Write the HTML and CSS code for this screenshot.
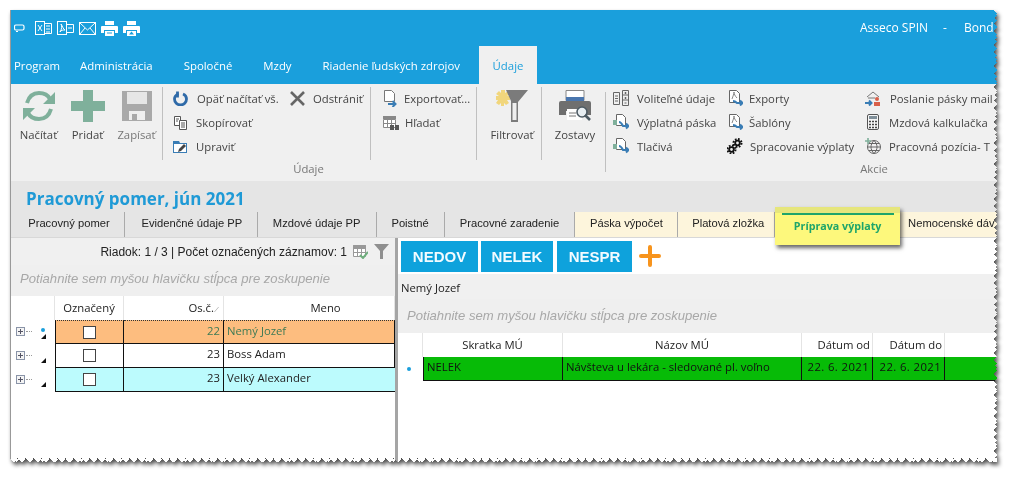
FILE: index.html
```html
<!DOCTYPE html>
<html lang="sk">
	<head>
		<meta charset="UTF-8">
		<title>Pracovný pomer, jún 2021</title>
		<link rel="stylesheet" href="styles.css">
	</head>
	<body>
		<div class="shot">
			<div class="window">
				<header class="bluebar">
					<div class="qat">
						<svg class="q-small" width="11" height="8" viewBox="0 0 11 8"><rect x=".5" y="1" width="9.500" height="5" rx="1.500" fill="none" stroke="#fff" stroke-width="1.200"/><path d="M2 7.500h2" stroke="#fff"/></svg>
						<svg width="17" height="17" viewBox="0 0 17 17" fill="none" stroke="#fff"><rect x=".5" y="1.500" width="9" height="13"/><path d="M9.500 3.500h7v10h-7M11 6h4M11 9h4M11 12h4M3 5l4 6M7 5l-4 6"/></svg>
						<svg width="17" height="17" viewBox="0 0 17 17" fill="none" stroke="#fff"><rect x=".5" y="1.500" width="9" height="13"/><path d="M9.500 4.500h7v8h-7M11 8h4M3 12c2-3 2-6 1-8 2 3 2 5 4 6-2 0-4 0-5 2z"/></svg>
						<svg width="17" height="17" viewBox="0 0 17 17" fill="none" stroke="#fff"><rect x=".5" y="2.500" width="16" height="12"/><path d="M1 3l7.500 7L16 3M1 14l5-6M16 14l-5-6"/></svg>
						<svg width="17" height="17" viewBox="0 0 17 17"><path fill="#fff" d="M4 1h9v4H4zM1 6h15a1 1 0 0 1 1 1v6h-3v-3H3v3H0V7a1 1 0 0 1 1-1z"/><path fill="#fff" d="M4 11h9v5H4z"/><path stroke="#1a9fdc" d="M6 13h5"/></svg>
						<svg width="17" height="17" viewBox="0 0 17 17"><path fill="#fff" d="M4 1h9v4H4zM1 6h15a1 1 0 0 1 1 1v6h-3v-3H3v3H0V7a1 1 0 0 1 1-1z"/><path fill="#fff" d="M4 11h9v5H4z"/><path fill="#1a9fdc" d="M8.500 11.500l2.500 3H6z"/></svg>
						<div class="account"><span>Asseco SPIN</span><span class="dash">-</span><span>Bond</span></div>
					</div>
					<nav class="rtabs">
						<a class="rtab short">Program</a>
						<a class="rtab">Administrácia</a>
						<a class="rtab">Spoločné</a>
						<a class="rtab">Mzdy</a>
						<a class="rtab">Riadenie ľudských zdrojov</a>
						<a class="rtab active">Údaje</a>
					</nav>
				</header>

				<div class="ribbon">
					<section class="rsection data">
						<div class="rcols">
							<div class="bigs first">
								<div class="big">
									<svg width="34" height="32" viewBox="0 0 34 32" fill="none" stroke="#7fb09b" stroke-width="4"><path d="M5 13C7 6 12 3 17 3c5 0 9 2 11 6"/><path d="M29 19c-2 7-7 10-12 10-5 0-9-2-11-6"/><path fill="#7fb09b" stroke="none" d="M33 2v12H21zM1 30V18h12z"/></svg>
									<span>Načítať</span>
								</div>
								<div class="big">
									<svg width="34" height="32" viewBox="0 0 34 32"><path fill="#7fb09b" d="M12 0h10v11h12v10H22v11H12V21H0V11h12z"/></svg>
									<span>Pridať</span>
								</div>
								<div class="big muted">
									<svg width="34" height="32" viewBox="0 0 32 32"><path fill="#a9a9a9" d="M1 1h30v30H1z"/><path fill="#e6e6e6" d="M6 2h20v12H6z"/><path fill="#efefef" d="M8 21h16v9H8z"/><path fill="#a9a9a9" d="M11 24h5v6h-5z"/></svg>
									<span>Zapísať</span>
								</div>
							</div>
							<i class="vsep"></i>
							<div class="scol c-reload">
								<div class="sbtn">
									<svg width="15" height="15" viewBox="0 0 15 15" fill="none" stroke="#2f6aa8" stroke-width="2.800"><path d="M5.500 3C2.500 4 1.500 6 1.500 8a6 6 0 0 0 12 0c0-2-1-4-3.500-5"/><path d="M4.500 .5v6"/></svg>
									<span class="gap-l">Opäť načítať vš.</span>
								</div>
								<div class="sbtn">
									<svg width="15" height="15" viewBox="0 0 15 15" fill="#fff" stroke="#555"><path d="M1.500 1.500h6v9h-6z"/><path d="M6.500 5.500h7v9h-7z"/><path d="M8 8h4M8 10h4M8 12h4M3 4h3M3 6h2"/></svg>
									<span>Skopírovať</span>
								</div>
								<div class="sbtn">
									<svg width="15" height="15" viewBox="0 0 15 15"><path fill="#3a7db5" d="M0 2h6l1 2h7v10H0z"/><path fill="#fff" d="M1 5h12v8H1z"/><path fill="#444" d="M5 13l1-3 5-5 2 2-5 5z"/></svg>
									<span>Upraviť</span>
								</div>
							</div>
							<div class="scol c-remove">
								<div class="sbtn">
									<svg width="15" height="15" viewBox="0 0 15 15" stroke="#666" stroke-width="2.600"><path d="M1 1l13 13M14 1L1 14"/></svg>
									<span>Odstrániť</span>
								</div>
							</div>
							<i class="vsep"></i>
							<div class="scol c-export">
								<div class="sbtn">
									<svg width="15" height="17" viewBox="0 0 15 17" fill="#fff" stroke="#777"><path d="M1.500 .5h7l3 3v8h-10z"/><path fill="none" stroke="#3a7db5" stroke-width="2" d="M5 14h7M9.500 11l3 3-3 3"/></svg>
									<span>Exportovať...</span>
								</div>
								<div class="sbtn">
									<svg width="16" height="15" viewBox="0 0 16 15"><path fill="#888" d="M0 1h13v3H0z"/><path fill="#fff" stroke="#888" d="M.5 4.500h12v8H.5zM4.500 4.500v8M8.500 4.500v8M.5 8.500h12"/><path fill="#555" d="M7 10h4v5H7zM12 10h4v5h-4z"/></svg>
									<span>Hľadať</span>
								</div>
							</div>
							<i class="vsep"></i>
							<div class="big filter">
								<svg width="32" height="33" viewBox="0 0 32 33"><path fill="#f1d67c" d="M5 1h4v3l3-2 2 3-3 2h3v4h-3l2 3-3 2-2-2v3H5v-3l-2 2-3-2 2-3H0V7h3L0 5l3-3 2 2z"/><path fill="#7b7b7b" d="M10 1h22L22 13v20h-7V12z"/><path fill="#efefef" d="M16.500 14h4v17h-4z"/></svg>
								<span>Filtrovať</span>
							</div>
							<i class="vsep"></i>
							<div class="big reports">
								<svg width="32" height="32" viewBox="0 0 32 32"><path fill="#fff" stroke="#888" d="M7 .5h18v10H7z"/><path fill="#4a76ae" d="M7 7h18v4H7z"/><path fill="#6f6f6f" d="M2 11h28a2 2 0 0 1 2 2v12h-7v-4H7v4H0V13a2 2 0 0 1 2-2z"/><path fill="#fff" d="M8 19h15v11H8z"/><path stroke="#777" d="M10 23h7M10 26h7"/><circle cx="23" cy="22" r="5" fill="#e8eef2" stroke="#4d5a63" stroke-width="1.600"/><path stroke="#4d5a63" stroke-width="2.600" d="M26 25l5 5"/></svg>
								<span>Zostavy</span>
							</div>
							<i class="vsep tall"></i>
						</div>
						<div class="rlabel">Údaje</div>
					</section>
					<section class="rsection actions">
						<div class="rcols">
							<div class="scol c-optional">
								<div class="sbtn">
									<svg width="16" height="16" viewBox="0 0 16 16" fill="none" stroke="#666"><path d="M.5 2.500h6v12h-6zM9.500 .5h6v15h-6zM2 6h3M2 8.500h3M2 11h3M9.500 5h6M9.500 10h6M12.500 2v2M11.500 3h2M12.500 7v2M11.500 8h2M11.500 13h2"/></svg>
									<span>Voliteľné údaje</span>
								</div>
								<div class="sbtn">
									<svg width="16" height="16" viewBox="0 0 16 16" fill="#fff" stroke="#666"><path d="M3.500 .5h6l3 3v8h-9z"/><path fill="#7fb09b" stroke="none" d="M0 6h4v5H0z"/><path fill="none" stroke="#3a7db5" stroke-width="2" d="M6 8c2 0 3 2 4 4h5M13 9.500l2.500 2.500-2.500 2.500"/></svg>
									<span>Výplatná páska</span>
								</div>
								<div class="sbtn">
									<svg width="16" height="16" viewBox="0 0 16 16" fill="#fff" stroke="#666"><path d="M3.500 .5h6l3 3v8h-9z"/><path fill="#7fb09b" stroke="none" d="M0 6h4v5H0z"/><path fill="none" stroke="#3a7db5" stroke-width="2" d="M6 8c2 0 3 2 4 4h5M13 9.500l2.500 2.500-2.500 2.500"/></svg>
									<span>Tlačivá</span>
								</div>
							</div>
							<div class="scol c-exports">
								<div class="sbtn">
									<svg width="16" height="16" viewBox="0 0 16 16" fill="#fff" stroke="#666"><path d="M2.500 .5h7l3 3v9h-10z"/><path fill="none" stroke="#888" d="M5 9c1-3 2-5 2-7 0 2 1 4 3 6"/><path fill="none" stroke="#3a7db5" stroke-width="2" d="M6 11c2 0 3 1 4 2h5M13 10.500l2.500 2.500-2.500 2.500"/></svg>
									<span>Exporty</span>
								</div>
								<div class="sbtn">
									<svg width="16" height="16" viewBox="0 0 16 16" fill="#fff" stroke="#666"><path d="M2.500 .5h7l3 3v9h-10z"/><path fill="none" stroke="#888" d="M5 9c1-3 2-5 2-7 0 2 1 4 3 6"/><path fill="none" stroke="#3a7db5" stroke-width="2" d="M6 11c2 0 3 1 4 2h5M13 10.500l2.500 2.500-2.500 2.500"/></svg>
									<span>Šablóny</span>
								</div>
								<div class="sbtn">
									<svg width="16" height="16" viewBox="0 0 16 16" fill="none" stroke="#111"><circle cx="10.500" cy="5" r="2.300" stroke-width="1.800"/><circle cx="10.500" cy="5" r="4" stroke-width="2" stroke-dasharray="1.700 1.440"/><circle cx="4.500" cy="11.500" r="2.300" stroke-width="1.800"/><circle cx="4.500" cy="11.500" r="4" stroke-width="2" stroke-dasharray="1.700 1.440"/></svg>
									<span class="gap-l">Spracovanie výplaty</span>
								</div>
							</div>
							<div class="scol c-send">
								<div class="sbtn">
									<svg width="16" height="16" viewBox="0 0 16 16" fill="none"><path stroke="#777" d="M2 7l6-5 6 5M3 8h7"/><circle cx="12" cy="9" r="2" fill="#d9604a"/><path fill="#d9604a" d="M9 12h6v4H9z"/><path stroke="#3a7db5" stroke-width="2" d="M0 13h6M4 10.500L6.500 13 4 15.500"/></svg>
									<span class="gap-l">Poslanie pásky mail</span>
								</div>
								<div class="sbtn">
									<svg width="16" height="16" viewBox="0 0 16 16"><rect x="2.500" y=".5" width="11" height="15" rx="1.500" fill="#f6f6f6" stroke="#555"/><path fill="#7f8f99" d="M4 2h8v3H4z"/><path stroke="#444" stroke-width="1.500" stroke-dasharray="2 1" d="M4 7.500h8M4 10.500h8M4 13.500h8"/></svg>
									<span>Mzdová kalkulačka</span>
								</div>
								<div class="sbtn">
									<svg width="16" height="16" viewBox="0 0 16 16" fill="none" stroke="#666"><circle cx="9" cy="9" r="6.500"/><path d="M2.500 9h13M9 2.500c-4 4-4 9 0 13M9 2.500c4 4 4 9 0 13M4 5.500h10M4 12.500h10"/><path stroke="#7fb09b" stroke-width="1.600" d="M0 3h6M3 0v6"/></svg>
									<span>Pracovná pozícia- T</span>
								</div>
							</div>
						</div>
						<div class="rlabel">Akcie</div>
					</section>
				</div>

				<div class="titleband">
					<h1>Pracovný pomer, jún 2021</h1>
					<nav class="tabs">
						<a class="tab t1">Pracovný pomer</a>
						<a class="tab t2">Evidenčné údaje PP</a>
						<a class="tab t3">Mzdové údaje PP</a>
						<a class="tab t4">Poistné</a>
						<a class="tab t5">Pracovné zaradenie</a>
						<a class="tab t6 cream">Páska výpočet</a>
						<a class="tab t7 cream">Platová zložka</a>
						<a class="tab t8 current"><b>Príprava výplaty</b></a>
						<a class="tab t9 cream">Nemocenské dáv</a>
					</nav>
				</div>

				<main class="panes">
					<div class="pane-left">
						<div class="status">
							<span>Riadok: 1 / 3 | Počet označených záznamov: 1</span>
							<svg width="15" height="15" viewBox="0 0 15 15" fill="#fff" stroke="#999"><path d="M.5 1.500h12v11H.5z"/><path fill="#999" d="M.5 1.500h12v3H.5z"/><path d="M4.500 4.500v8M8.500 4.500v8M.5 8.500h12"/><path fill="none" stroke="#6fae7d" stroke-width="2" d="M7 11l3 3 5-6"/></svg>
							<svg width="15" height="15" viewBox="0 0 15 15"><path fill="#8f8f8f" d="M0 0h15L9 7v8H6V7z"/></svg>
						</div>
						<div class="groupbar">Potiahnite sem myšou hlavičku stĺpca pre zoskupenie</div>
						<div class="grid left-grid">
							<div class="hcell"></div>
							<div class="hcell head">Označený</div>
							<div class="hcell head right osc">Os.č.<em>⁄</em></div>
							<div class="hcell head meno">Meno</div>

							<div class="marker"><i class="plus"></i><i class="dot"></i><i class="tri"></i></div>
							<div class="cell orange dotted check"><i class="box"></i></div>
							<div class="cell orange dotted num green-text">22</div>
							<div class="cell orange dotted green-text">Nemý Jozef</div>

							<div class="marker"><i class="plus"></i><i class="tri"></i></div>
							<div class="cell check"><i class="box"></i></div>
							<div class="cell num">23</div>
							<div class="cell">Boss Adam</div>

							<div class="marker"><i class="plus"></i><i class="tri"></i></div>
							<div class="cell aqua check"><i class="box"></i></div>
							<div class="cell aqua num">23</div>
							<div class="cell aqua">Velký Alexander</div>
						</div>
					</div>
					<div class="pane-right">
						<div class="quick">
							<button class="qbtn b1">NEDOV</button>
							<button class="qbtn b2">NELEK</button>
							<button class="qbtn b3">NESPR</button>
							<svg class="qplus" width="22" height="22" viewBox="0 0 22 22"><path stroke="#f7941d" stroke-width="4" stroke-linecap="round" d="M11 2v18M2 11h18"/></svg>
						</div>
						<div class="person">Nemý Jozef</div>
						<div class="groupbar wide">Potiahnite sem myšou hlavičku stĺpca pre zoskupenie</div>
						<div class="grid right-grid">
							<div class="hcell"></div>
							<div class="hcell head">Skratka MÚ</div>
							<div class="hcell head">Názov MÚ</div>
							<div class="hcell head right">Dátum od</div>
							<div class="hcell head right">Dátum do</div>
							<div class="hcell"></div>

							<div class="marker"><i class="dot solo"></i></div>
							<div class="cell lime">NELEK</div>
							<div class="cell lime">Návšteva u lekára - sledované pl. voľno</div>
							<div class="cell lime num date">22. 6. 2021</div>
							<div class="cell lime num date">22. 6. 2021</div>
							<div class="cell lime"></div>
						</div>
					</div>
				</main>
			</div>
		</div>
	</body>
</html>
```
FILE: styles.css
```css
html, body {
	margin: 0;
	padding: 0;
	background: #fff;
	height: 479px;
	overflow: hidden;
	font-family: 'Open Sans', 'Liberation Sans', sans-serif;
	font-size: 11px;
	color: #333;
}
svg {
	flex: none;
	display: block;
}
.shot {
	padding: 10px 0 0 10px;
	width: 992px;
	filter: drop-shadow(2px 3px 2px rgba(0, 0, 0, .7));
}
.window {
	width: 987px;
	height: 452px;
	background: #fff;
	overflow: hidden;
	border-left: 1px solid #999;
	box-sizing: border-box;
	-webkit-mask:
		linear-gradient(#000 0 0) 0 0 / calc(100% - 4px) calc(100% - 4px) no-repeat,
		conic-gradient(from 225deg at 100% 50%, #000 90deg, #0000 0) 100% 0 / 4px 7px repeat-y,
		conic-gradient(from 225deg at 100% 50%, #000 90deg, #0000 0) 100% 0 / 3px 11px repeat-y,
		conic-gradient(from 315deg at 50% 100%, #000 90deg, #0000 0) 0 100% / 8px 4px repeat-x,
		conic-gradient(from 315deg at 50% 100%, #000 90deg, #0000 0) 0 100% / 13px 3px repeat-x;
}

/* blue top */
.bluebar {
	background: #1a9fdc;
	height: 74px;
	color: #fff;
}
.qat {
	height: 36px;
	display: flex;
	align-items: center;
	gap: 5px;
	padding-left: 3px;
}
.q-small {
	margin-right: 5px;
}
.account {
	margin-left: auto;
	display: flex;
	width: 137px;
	white-space: nowrap;
	font-size: 12px;
	position: relative;
	top: -1px;
}
.dash {
	margin: 0 17px 0 15px;
}
.rtabs {
	height: 38px;
	display: flex;
	padding-left: 3px;
	gap: 31px;
}
.rtab {
	font-size: 11.4px;
	line-height: 39px;
	white-space: nowrap;
}
.rtab.short {
	margin-right: -11px;
}
.rtab.active {
	margin-left: -12px;
	background: #f0f0f0;
	color: #1a9fdc;
	width: 58px;
	text-align: center;
}

/* ribbon */
.ribbon {
	height: 97px;
	background: #f0f0f0;
	display: flex;
	overflow: hidden;
	color: #444;
}
.rsection {
	flex: none;
	display: flex;
	flex-direction: column;
}
.rsection.data {
	width: 595px;
}
.rsection.actions {
	width: 536px;
}
.rcols {
	display: flex;
	height: 76px;
}
.rlabel {
	text-align: center;
	color: #777;
	font-size: 11.3px;
	line-height: 17px;
}
.vsep {
	flex: none;
	width: 1px;
	height: 73px;
	margin-top: 3px;
	background: #c0c0c0;
}
.vsep.tall {
	height: 80px;
	margin-top: 8px;
}
.bigs {
	display: flex;
	width: 151px;
	padding-left: 3px;
	box-sizing: border-box;
}
.big {
	width: 49px;
	flex: none;
	display: flex;
	flex-direction: column;
	align-items: center;
	padding-top: 6px;
	box-sizing: border-box;
	white-space: nowrap;
	font-size: 11.3px;
}
.big span {
	margin-top: 5px;
}
.big.muted {
	color: #777;
}
.big.filter {
	width: 64px;
	padding: 5px 0 0 6px;
}
.big.reports {
	width: 63px;
	padding-left: 3px;
}
.scol {
	flex: none;
	display: grid;
	grid-auto-rows: 24px;
	align-content: start;
	padding-top: 2px;
	box-sizing: border-box;
}
.sbtn {
	display: flex;
	align-items: center;
	gap: 8px;
	white-space: nowrap;
	font-size: 11.3px;
}
.gap-l {
	margin-left: 1px;
}
.c-reload {
	width: 127px;
	padding-left: 10px;
}
.c-remove {
	width: 80px;
}
.c-export {
	width: 105px;
	padding-left: 12px;
}
.c-export .sbtn, .c-exports .sbtn {
	gap: 6px;
}
.c-optional {
	width: 121px;
	padding-left: 7px;
}
.c-exports {
	width: 138px;
}
.c-send {
	width: 270px;
}

/* title and page tabs */
.titleband {
	background: #e5e5e5;
	height: 57px;
	display: flex;
	flex-direction: column;
}
h1 {
	margin: 0;
	height: 32px;
	padding: 7px 0 0 15px;
	box-sizing: border-box;
	font-size: 17px;
	line-height: 22px;
	font-weight: 700;
	color: #1f9ad6;
}
.tabs {
	display: flex;
	height: 25px;
	border-bottom: 1px solid #d8d8d8;
	font-family: 'Liberation Sans', sans-serif;
	color: #222;
	font-size: 11.2px;
}
.tab {
	box-sizing: border-box;
	border-right: 1px solid #aaa;
	text-align: center;
	line-height: 23px;
	white-space: nowrap;
	overflow: hidden;
}
.tab.cream {
	background: #fdf5dc;
}
.t1 { width: 114px; padding-left: 3px; }
.t2 { width: 133px; padding-left: 2px; }
.t3 { width: 119px; }
.t4 { width: 68px; }
.t5 { width: 131px; }
.t6 { width: 103px; }
.t7 { width: 97px; padding-left: 4px; }
.t8 { width: 125px; }
.t9 { width: 97px; padding-left: 8px; text-align: left; border: 0; }
.tab.current {
	position: relative;
	height: 38px;
	margin-top: -5px;
	background: linear-gradient(#e6e67c 6px, #fdf87c 6px);
	border: 0;
	box-shadow: 2px 3px 4px rgba(0, 0, 0, .6);
	padding-top: 11px;
	line-height: 16px;
	font-family: 'Open Sans', sans-serif;
	font-size: 10.7px;
	color: #1ea56a;
}
.tab.current::before {
	content: '';
	position: absolute;
	left: 7px;
	right: 6px;
	top: 6px;
	height: 2px;
	background: #1ea56a;
}

/* panes */
.panes {
	display: flex;
	height: 225px;
}
.pane-left {
	width: 384px;
	flex: none;
	border-right: 3px solid #a5a5a5;
}
.pane-right {
	flex: 1;
	min-width: 0;
}
.status {
	height: 27px;
	background: #f0f0f0;
	display: flex;
	align-items: center;
	justify-content: flex-end;
	gap: 6px;
	padding-right: 6px;
	font-family: 'Liberation Sans', sans-serif;
	font-size: 12px;
	color: #222;
}
.groupbar {
	height: 31px;
	background: #efefef;
	padding-left: 9px;
	line-height: 27px;
	font-family: 'Liberation Sans', sans-serif;
	font-style: italic;
	font-size: 13.1px;
	color: #a8a8a8;
	white-space: nowrap;
}
.groupbar.wide {
	height: 34px;
	line-height: 34px;
}
.grid {
	display: grid;
	grid-auto-rows: 24px;
	background: #fff;
	color: #222;
}
.left-grid {
	grid-template-columns: 44px 69px 100px 171px;
}
.right-grid {
	grid-template-columns: 25px 140px 239px 71px 72px 1fr;
}
.hcell {
	background: #fff;
	border-right: 1px solid #e4e4e4;
	line-height: 24px;
	font-size: 11.3px;
	text-align: center;
	white-space: nowrap;
}
.hcell.right {
	text-align: right;
	padding-right: 2px;
}
.hcell.osc {
	padding-right: 6px;
}
.hcell.meno {
	padding-left: 33px;
}
.hcell em {
	font-size: 8px;
	color: #999;
	margin-left: 2px;
}
.cell {
	box-sizing: border-box;
	border-right: 1px solid #111;
	border-bottom: 1px solid #111;
	padding: 0 3px 2px;
	line-height: 20px;
	font-size: 11.3px;
	white-space: nowrap;
	overflow: hidden;
}
.cell:last-child {
	border-right: 0;
}
.left-grid .cell.check, .right-grid .cell:nth-child(6n + 2) {
	border-left: 1px solid #111;
}
.num {
	text-align: right;
}
.date {
	letter-spacing: .4px;
}
.check {
	display: flex;
	align-items: center;
	justify-content: center;
	padding: 0;
}
.box {
	width: 11px;
	height: 11px;
	border: 1px solid #444;
	background: #fff;
}
.orange {
	background: #fdbd7f;
}
.aqua {
	background: #bcfbfd;
}
.lime {
	background: #07bb07;
	color: #111;
}
.dotted {
	border-top: 1px dotted #333;
}
.green-text {
	color: #3d7a55;
}
.marker {
	position: relative;
}
.plus {
	position: absolute;
	left: 5px;
	top: 7px;
	width: 7px;
	height: 7px;
	border: 1px solid #8a94a8;
	background: linear-gradient(#556 0 0) center / 5px 1px no-repeat, linear-gradient(#556 0 0) center / 1px 5px no-repeat, #f4f4f4;
}
.plus::after {
	content: '';
	position: absolute;
	left: 9px;
	top: 3px;
	width: 6px;
	border-top: 1px dotted #999;
}
.dot {
	position: absolute;
	left: 30px;
	top: 8px;
	width: 4px;
	height: 4px;
	border-radius: 50%;
	background: #1a9fdc;
}
.dot.solo {
	left: 9px;
	top: 10px;
}
.tri {
	position: absolute;
	left: 30px;
	top: 14px;
	border-style: solid;
	border-width: 0 0 5px 5px;
	border-color: transparent transparent #111 transparent;
}
.quick {
	height: 36px;
	background: #fff;
	display: flex;
	align-items: center;
	padding-left: 3px;
	gap: 3px;
}
.qbtn {
	height: 31px;
	border: 0;
	padding: 0;
	background: #0ea2dc;
	color: #f3fbff;
	font-family: 'Liberation Sans', sans-serif;
	font-weight: 700;
	font-size: 15px;
}
.b1 { width: 77px; }
.b2 { width: 72px; }
.b3 { width: 75px; margin-left: 1px; }
.qplus {
	margin-left: 4px;
}
.person {
	height: 25px;
	background: #f0f0f0;
	padding-left: 3px;
	line-height: 27px;
	font-size: 11.3px;
	color: #222;
}
```
